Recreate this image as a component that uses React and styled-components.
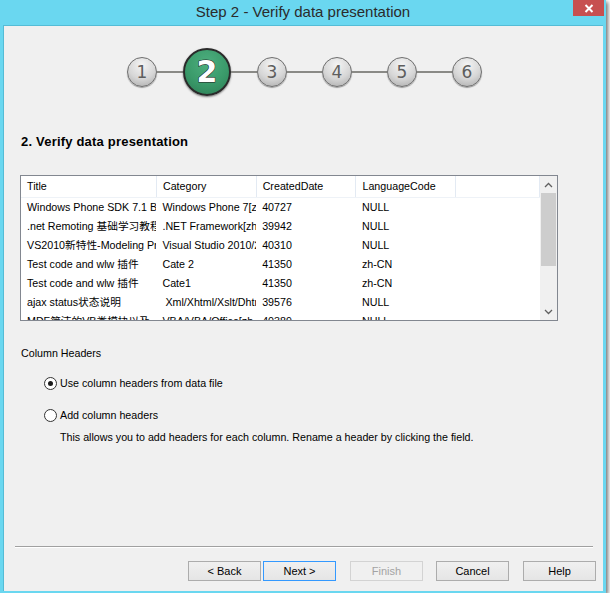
import React from "react";
import styled, { createGlobalStyle } from "styled-components";

const GlobalStyle = createGlobalStyle`
	html, body {
		margin: 0;
		padding: 0;
		background: #ffffff;
	}
	body {
		font-family: "Liberation Sans", "Noto Sans CJK SC", sans-serif;
		font-size: 11px;
		color: #000;
	}
`;

const UI_FONT = `"Liberation Sans", "Noto Sans CJK SC", sans-serif`;

const Window = styled.div`
	width: 606px;
	height: 593px;
	background: #6ad7f0;
	box-shadow: 2px 2px 4px rgba(0, 0, 0, 0.55);
	display: flex;
	flex-direction: column;
	box-sizing: border-box;
	padding: 0 3px 2px 3px;
`;

const TitleBar = styled.div`
	height: 25px;
	margin: 0 -3px;
	display: grid;
	grid-template-columns: 1fr auto 1fr;
	align-items: start;
`;

const TitleText = styled.div`
	grid-column: 2;
	font-family: ${ UI_FONT };
	font-size: 15px;
	line-height: 23px;
	color: #2b2b2b;
`;

const CloseButton = styled.div`
	grid-column: 3;
	justify-self: end;
	width: 31px;
	height: 16px;
	margin-right: 2px;
	background: #c75050;
	display: flex;
	align-items: center;
	justify-content: center;
`;

const Panel = styled.div`
	flex: 1;
	background: #f0f0f0;
	border: 1px solid #54bcd6;
	border-right: none;
	border-bottom: none;
	display: flex;
	flex-direction: column;
	padding: 0 0 0 16px;
`;

const Steps = styled.div`
	display: flex;
	align-items: center;
	height: 48px;
	margin: 22px 0 0 107px;
`;

const StepCircle = styled.div`
	flex: none;
	box-sizing: border-box;
	width: ${ props => props.active ? 48 : 30 }px;
	height: ${ props => props.active ? 48 : 30 }px;
	border-radius: 50%;
	border: ${ props => props.active ? "2px solid #2a2a2a" : "1px solid #6e6e6e" };
	background: ${ props => props.active
		? "radial-gradient(circle at 50% 30%, #4dae7e 0%, #3a9a6a 55%, #2c7c54 100%)"
		: "radial-gradient(circle at 50% 25%, #f4f4f4 0%, #d6d6d6 55%, #a9a9a9 100%)" };
	box-shadow: ${ props => props.active ? "0 1px 2px rgba(0,0,0,0.5)" : "0 1px 1px rgba(0,0,0,0.35)" };
	display: flex;
	align-items: center;
	justify-content: center;
	font-family: "DejaVu Sans", sans-serif;
	font-size: ${ props => props.active ? 30 : 17 }px;
	font-weight: ${ props => props.active ? "bold" : "normal" };
	color: ${ props => props.active ? "#ffffff" : "#5e5e5e" };
	-webkit-text-stroke: ${ props => props.active ? "1px #222" : "0" };
	paint-order: stroke fill;
	line-height: 1;
`;

const Connector = styled.div`
	flex: none;
	width: ${ props => props.width }px;
	height: 2px;
	background: #8a8a86;
`;

const Heading = styled.div`
	margin-top: 38px;
	margin-left: 1px;
	font-family: ${ UI_FONT };
	font-weight: bold;
	font-size: 13px;
	line-height: 16px;
	letter-spacing: 0.2px;
`;

const Grid = styled.div`
	margin-top: 25px;
	width: 538px;
	height: 146px;
	box-sizing: border-box;
	border: 1px solid #828790;
	background: #ffffff;
	display: flex;
	overflow: hidden;
`;

const GridBody = styled.div`
	flex: 1;
	overflow: hidden;
`;

const Table = styled.table`
	border-collapse: collapse;
	table-layout: fixed;
	font-family: ${ UI_FONT };
	font-size: 10.7px;
`;

const HeaderCell = styled.th`
	width: ${ props => props.width }px;
	height: 21px;
	padding: 0 0 0 6px;
	box-sizing: border-box;
	text-align: left;
	font-weight: normal;
	border-right: 1px solid #e3eaf3;
	border-bottom: 1px solid #eef2f7;
	white-space: nowrap;
	overflow: hidden;
`;

const Cell = styled.td`
	height: 19px;
	padding: 0 0 0 6px;
	box-sizing: border-box;
	white-space: pre;
	overflow: hidden;
	max-width: 0;
`;

const Scrollbar = styled.div`
	flex: none;
	width: 17px;
	background: #f0f0f0;
	display: flex;
	flex-direction: column;
	align-items: center;
`;

const ScrollArrow = styled.div`
	height: 17px;
	display: flex;
	align-items: center;
	justify-content: center;
`;

const ScrollTrack = styled.div`
	flex: 1;
	width: 100%;
	display: flex;
	flex-direction: column;
`;

const ScrollThumb = styled.div`
	height: 73px;
	margin: 0 1px;
	background: #cdcdcd;
`;

const SectionLabel = styled.div`
	margin-top: 25px;
	margin-left: 1px;
	font-family: ${ UI_FONT };
	font-size: 10.7px;
	line-height: 14px;
`;

const RadioRow = styled.label`
	display: flex;
	align-items: center;
	gap: 3px;
	margin-left: 24px;
	margin-top: ${ props => props.top }px;
	font-family: ${ UI_FONT };
	font-size: 10.7px;
	line-height: 14px;
`;

const RadioDot = styled.span`
	width: 13px;
	height: 13px;
	box-sizing: border-box;
	border-radius: 50%;
	border: 1px solid #333;
	background: #fff;
	display: flex;
	align-items: center;
	justify-content: center;

	&::after {
		content: "";
		width: 5px;
		height: 5px;
		border-radius: 50%;
		background: ${ props => props.checked ? "#1a1a1a" : "transparent" };
	}
`;

const Hint = styled.div`
	margin-left: 40px;
	margin-top: 8px;
	font-family: ${ UI_FONT };
	font-size: 10.7px;
	line-height: 14px;
`;

const Spacer = styled.div`
	flex: 1;
`;

const Separator = styled.div`
	width: 578px;
	margin-left: -5px;
	height: 1px;
	background: #a0a0a0;
	border-bottom: 1px solid #ffffff;
`;

const ButtonBar = styled.div`
	display: flex;
	margin: 13px 0 10px 168px;
`;

const Button = styled.button`
	width: 73px;
	height: 20px;
	margin-left: ${ props => props.gap }px;
	padding: 0;
	box-sizing: border-box;
	font-family: ${ UI_FONT };
	font-size: 11px;
	color: ${ props => props.disabled ? "#a3a3a3" : "#000" };
	background: ${ props => props.disabled ? "#f0f0f0" : "linear-gradient(#f0f0f0, #e5e5e5)" };
	border: 1px solid ${ props => props.primary ? "#3399ff" : props.disabled ? "#d3d3d3" : "#acacac" };
	border-radius: 0;
	outline: none;
`;

const columns = [
	{ key: "title", label: "Title", width: 136 },
	{ key: "category", label: "Category", width: 100 },
	{ key: "date", label: "CreatedDate", width: 100 },
	{ key: "lang", label: "LanguageCode", width: 100 },
	{ key: "extra", label: "", width: 84 },
];

const rows = [
	{ title: "Windows Phone SDK 7.1 Beta2 发布", category: "Windows Phone 7[zh-cn]", date: "40727", lang: "NULL" },
	{ title: ".net Remoting 基础学习教程", category: ".NET Framework[zh-cn]", date: "39942", lang: "NULL" },
	{ title: "VS2010新特性-Modeling Project", category: "Visual Studio 2010/2012", date: "40310", lang: "NULL" },
	{ title: "Test code and wlw 插件", category: "Cate 2", date: "41350", lang: "zh-CN" },
	{ title: "Test code and wlw 插件", category: "Cate1", date: "41350", lang: "zh-CN" },
	{ title: "ajax status状态说明", category: " Xml/Xhtml/Xslt/Dhtml", date: "39576", lang: "NULL" },
	{ title: "MDF简洁的VB类模块以及", category: "VBA/VBA/Office[zh-cn]", date: "40389", lang: "NULL" },
];

const steps = [1, 2, 3, 4, 5, 6];
const connectorWidths = [26, 26, 35, 35, 35];

const Chevron = ({ up }) => (
	<svg width = "9" height = "6" viewBox = "0 0 9 6">
		<path
			d = { up ? "M1 5 L4.5 1.5 L8 5" : "M1 1 L4.5 4.5 L8 1" }
			fill = "none"
			stroke = "#606060"
			strokeWidth = "1.3"
		/>
	</svg>
);

const App = () => {
	return (
		<>
			<GlobalStyle />
			<Window>
				<TitleBar>
					<TitleText>Step 2 - Verify data presentation</TitleText>
					<CloseButton>
						<svg width = "10" height = "9" viewBox = "0 0 10 9">
							<path d = "M1.5 1 L8.5 8 M8.5 1 L1.5 8" stroke = "#fff" strokeWidth = "2" />
						</svg>
					</CloseButton>
				</TitleBar>

				<Panel>
					<Steps>
						{
							steps.map( (n, i) => (
								<React.Fragment key = { n }>
									<StepCircle active = { n === 2 }>{ n }</StepCircle>
									{ i < connectorWidths.length && <Connector width = { connectorWidths[i] } /> }
								</React.Fragment>
							))
						}
					</Steps>

					<Heading>2. Verify data presentation</Heading>

					<Grid>
						<GridBody>
							<Table>
								<thead>
									<tr>
										{ columns.map( col => <HeaderCell key = { col.key } width = { col.width }>{ col.label }</HeaderCell> ) }
									</tr>
								</thead>
								<tbody>
									{
										rows.map( (row, i) => (
											<tr key = { i }>
												{ columns.map( col => <Cell key = { col.key }>{ row[col.key] || "" }</Cell> ) }
											</tr>
										))
									}
								</tbody>
							</Table>
						</GridBody>
						<Scrollbar>
							<ScrollArrow><Chevron up /></ScrollArrow>
							<ScrollTrack>
								<ScrollThumb />
							</ScrollTrack>
							<ScrollArrow><Chevron /></ScrollArrow>
						</Scrollbar>
					</Grid>

					<SectionLabel>Column Headers</SectionLabel>

					<RadioRow top = { 16 }>
						<RadioDot checked />
						Use column headers from data file
					</RadioRow>
					<RadioRow top = { 18 }>
						<RadioDot />
						Add column headers
					</RadioRow>
					<Hint>This allows you to add headers for each column. Rename a header by clicking the field.</Hint>

					<Spacer />
					<Separator />

					<ButtonBar>
						<Button>&lt; Back</Button>
						<Button primary gap = { 2 }>Next &gt;</Button>
						<Button disabled gap = { 14 }>Finish</Button>
						<Button gap = { 13 }>Cancel</Button>
						<Button gap = { 14 }>Help</Button>
					</ButtonBar>
				</Panel>
			</Window>
		</>
	);
};

export default App;
